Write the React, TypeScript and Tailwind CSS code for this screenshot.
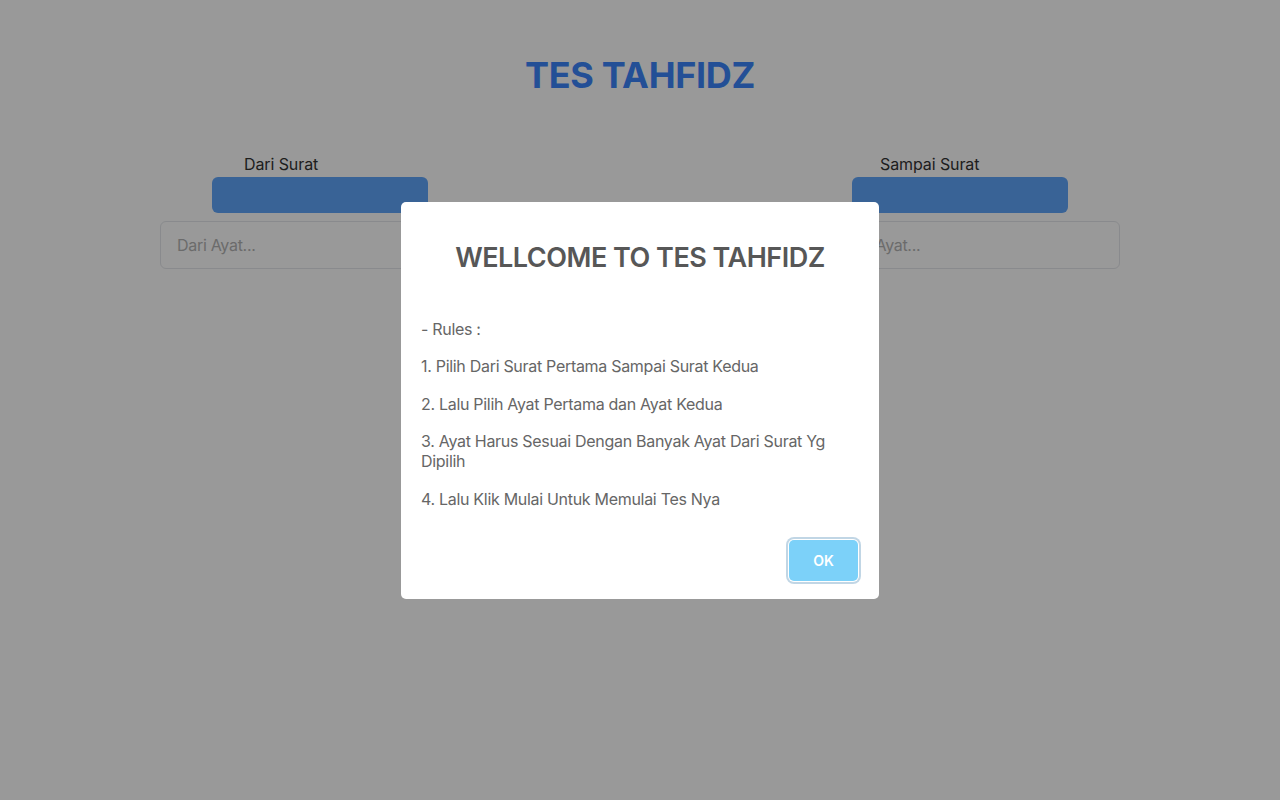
import { useState } from "react";

const rules = [
  "- Rules :",
  "1. Pilih Dari Surat Pertama Sampai Surat Kedua",
  "2. Lalu Pilih Ayat Pertama dan Ayat Kedua",
  "3. Ayat Harus Sesuai Dengan Banyak Ayat Dari Surat Yg Dipilih",
  "4. Lalu Klik Mulai Untuk Memulai Tes Nya",
];

function SurahPicker({ label, placeholder, labelPad }: { label: string; placeholder: string; labelPad: string }) {
  return (
    <div className="flex w-[320px] flex-col">
      <div className="flex justify-center">
        <div className="w-[216px]">
          <div className={`${labelPad} text-[16px] leading-[24px] tracking-[-0.1px] text-[#333333]`}>{label}</div>
          <div className="mt-px h-[36px] rounded-[6px] bg-[#60a5fa]" />
        </div>
      </div>
      <input
        type="text"
        placeholder={placeholder}
        className="mt-2 h-[48px] w-full rounded-[6px] border border-gray-200 bg-white px-4 text-[16px] tracking-[-0.3px] text-[#333] outline-none placeholder:text-[#b3b3b3]"
      />
    </div>
  );
}

export default function App() {
  const [open, setOpen] = useState(true);

  return (
    <div className="relative min-h-[800px] bg-white font-['Inter',sans-serif]">
      <div className="mx-auto w-[960px] pt-[53px]">
        <h1 className="text-center text-[36px] font-bold leading-[44px] tracking-[-0.35px] text-[#3b84fb]">
          TES TAHFIDZ
        </h1>
        <div className="mt-[55px] flex justify-between">
          <SurahPicker label="Dari Surat" placeholder="Dari Ayat..." labelPad="pl-8" />
          <SurahPicker label="Sampai Surat" placeholder="Sampai Ayat..." labelPad="pl-7" />
        </div>
      </div>

      {open ? (
        <div className="fixed inset-0 flex items-center justify-center bg-black/40">
          <div className="w-[478px] rounded-[5px] bg-white">
            <h2 className="pt-[38px] text-center text-[27px] font-semibold leading-[36px] tracking-[-0.5px] text-[#575757]">
              WELLCOME TO TES TAHFIDZ
            </h2>
            <div className="mt-[43px] flex flex-col gap-[17.5px] px-5 text-[16px] leading-[20px] tracking-[-0.3px] text-[#666666]">
              {rules.map((rule) => (
                <p key={rule}>{rule}</p>
              ))}
            </div>
            <div className="flex justify-end pb-[18px] pr-[21px] pt-[31px]">
              <button
                type="button"
                onClick={() => setOpen(false)}
                className="h-[41px] w-[69px] rounded-[5px] bg-[#7cd1f9] text-[14px] font-semibold text-white shadow-[0_0_0_1px_#fff,0_0_0_3px_rgba(43,114,165,0.29)]"
              >
                OK
              </button>
            </div>
          </div>
        </div>
      ) : null}
    </div>
  );
}
